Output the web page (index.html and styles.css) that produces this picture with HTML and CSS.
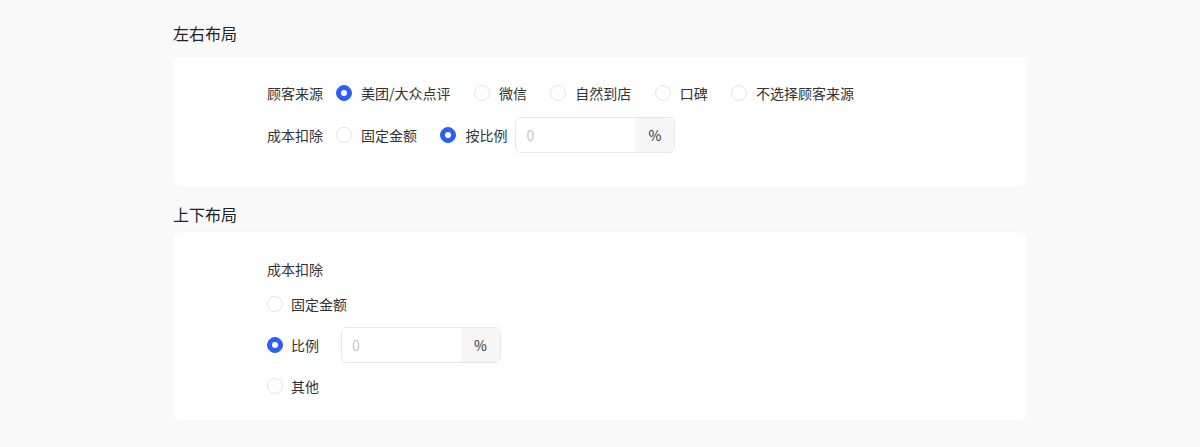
FILE: index.html
```html
<!DOCTYPE html>
<html lang="zh-CN">
<head>
  <meta charset="UTF-8">
  <meta name="viewport" content="width=device-width, initial-scale=1.0">
  <title>布局示例</title>
  <link rel="stylesheet" href="styles.css">
</head>
<body>
  <div class="container">
    <h3 class="section-title first">左右布局</h3>
    <div class="card card-horizontal">
      <div class="form-row">
        <span class="form-label">顾客来源</span>
        <label class="radio"><span class="radio-dot checked"></span>美团/大众点评</label>
        <label class="radio"><span class="radio-dot"></span>微信</label>
        <label class="radio"><span class="radio-dot"></span>自然到店</label>
        <label class="radio"><span class="radio-dot"></span>口碑</label>
        <label class="radio"><span class="radio-dot"></span>不选择顾客来源</label>
      </div>
      <div class="form-row">
        <span class="form-label">成本扣除</span>
        <label class="radio"><span class="radio-dot"></span>固定金额</label>
        <label class="radio tight"><span class="radio-dot checked"></span>按比例</label>
        <div class="input-group">
          <input type="text" placeholder="0">
          <span class="addon">%</span>
        </div>
      </div>
    </div>

    <h3 class="section-title">上下布局</h3>
    <div class="card card-vertical">
      <div class="form-label-top">成本扣除</div>
      <div class="radio-list">
        <div class="radio-row">
          <label class="radio"><span class="radio-dot"></span>固定金额</label>
        </div>
        <div class="radio-row">
          <label class="radio"><span class="radio-dot checked"></span>比例</label>
          <div class="input-group wide-gap">
            <input type="text" placeholder="0">
            <span class="addon">%</span>
          </div>
        </div>
        <div class="radio-row">
          <label class="radio"><span class="radio-dot"></span>其他</label>
        </div>
      </div>
    </div>
  </div>
</body>
</html>
```

FILE: styles.css
```css
body {
  margin: 0;
  padding: 0;
  background-color: #f9f9f9;
  font-family: "Noto Sans CJK SC", "Noto Sans", sans-serif;
  color: #333;
}

.container {
  width: 854px;
  margin: 0 auto;
}

.section-title {
  margin: 16px 0 7px;
  font-size: 16px;
  font-weight: normal;
  line-height: 22px;
  color: #222;
}

.section-title.first {
  margin: 22px 0 13px;
}

.card {
  background-color: #fff;
  border-radius: 8px;
  box-shadow: 0 0 2px rgba(0, 0, 0, 0.04);
}

.card-horizontal {
  padding: 18px 0 34px 94px;
  display: flex;
  flex-direction: column;
  gap: 6px;
}

.card-vertical {
  padding: 26px 0 14px 94px;
}

.form-row {
  display: flex;
  align-items: center;
  height: 36px;
}

.form-label {
  font-size: 14px;
  margin-right: 13px;
  white-space: nowrap;
}

.form-label-top {
  font-size: 14px;
  line-height: 22px;
  margin-bottom: 4px;
}

.radio {
  display: flex;
  align-items: center;
  gap: 9px;
  font-size: 14px;
  margin-right: 23.4px;
  white-space: nowrap;
  cursor: pointer;
}

.radio.tight {
  margin-right: 8px;
}

.radio-list {
  display: flex;
  flex-direction: column;
  gap: 1px;
}

.radio-row {
  display: flex;
  align-items: center;
  height: 40px;
}

.radio-row .radio {
  margin-right: 0;
  gap: 8px;
}

.radio-dot {
  width: 16px;
  height: 16px;
  box-sizing: border-box;
  border: 1px solid #e3e3e3;
  border-radius: 50%;
  background-color: #fff;
  display: inline-block;
  position: relative;
}

.radio-dot.checked {
  background-color: #2d5ff5;
  border-color: #2d5ff5;
}

.radio-dot.checked::after {
  content: "";
  position: absolute;
  left: 4px;
  top: 4px;
  width: 6px;
  height: 6px;
  border-radius: 50%;
  background-color: #fff;
}

.input-group {
  display: flex;
  width: 160px;
  height: 36px;
  box-sizing: border-box;
  border: 1px solid #e6e6e6;
  border-radius: 6px;
  overflow: hidden;
}

.input-group.wide-gap {
  margin-left: 22px;
}

.input-group input {
  flex: 1;
  min-width: 0;
  border: none;
  outline: none;
  padding: 0 10px;
  font-size: 14px;
  font-family: inherit;
  color: #333;
}

.input-group input::placeholder {
  color: #c8c8c8;
}

.addon {
  width: 39px;
  background-color: #f6f6f6;
  display: flex;
  align-items: center;
  justify-content: center;
  font-size: 14px;
  color: #333;
}
```
